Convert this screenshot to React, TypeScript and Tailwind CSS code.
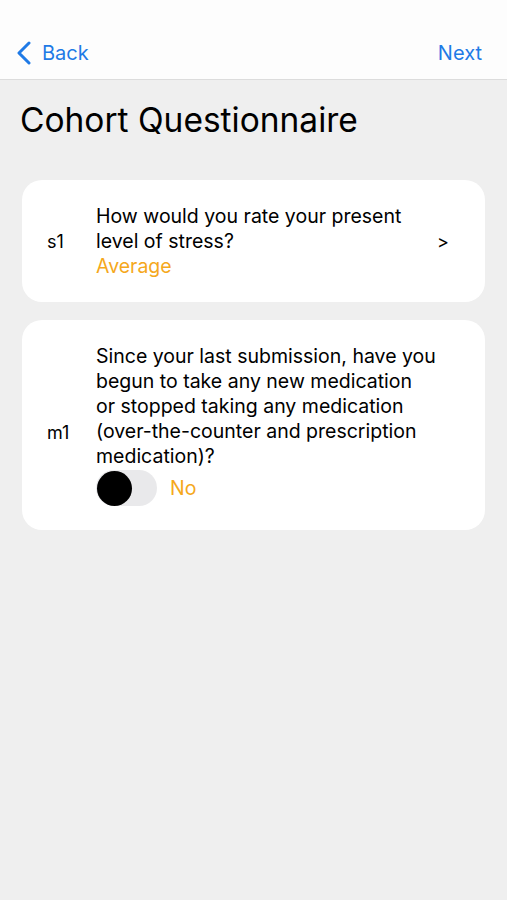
import React from "react";

export default function App() {
  return (
    <div className="w-[507px] h-[900px] bg-[#efefef] flex flex-col" style={{ fontFamily: "Inter, 'Liberation Sans', sans-serif" }}>
      <div className="h-[80px] bg-[#fdfdfd] border-b border-[#dcdcdc] flex items-end justify-between pb-[14px] px-[16px]">
        <div className="flex items-center gap-[10px] text-[#1f7ae6]">
          <svg width="16" height="24" viewBox="0 0 16 24">
            <polyline points="13,2 3,12 13,22" fill="none" stroke="#1f7ae6" strokeWidth="3" strokeLinecap="round" strokeLinejoin="round" />
          </svg>
          <span className="text-[20px] leading-[24px]">Back</span>
        </div>
        <span className="text-[20px] leading-[24px] text-[#1f7ae6] pr-[9px]">Next</span>
      </div>
      <div className="px-[20px] pt-[18px]">
        <h1 className="text-[33.5px] leading-[44px] text-black">Cohort Questionnaire</h1>
      </div>
      <div className="px-[22px] pt-[38px] flex flex-col gap-[18px]">
        <div className="bg-white rounded-[20px] h-[122px] flex items-center pl-[25px] pr-[36px]">
          <span className="w-[49px] text-[18px] text-black">s1</span>
          <div className="flex-1 text-[19.5px] leading-[25px] text-black">
            <div>How would you rate your present</div>
            <div>level of stress?</div>
            <div className="text-[#f5a81c]">Average</div>
          </div>
          <span className="text-[18px] text-black">&gt;</span>
        </div>
        <div className="bg-white rounded-[20px] h-[210px] flex items-center pl-[25px] pr-[20px]">
          <span className="w-[49px] text-[18px] text-black mt-[14px]">m1</span>
          <div className="flex-1 text-[19.5px] leading-[25px] text-black">
            <div>Since your last submission, have you</div>
            <div>begun to take any new medication</div>
            <div>or stopped taking any medication</div>
            <div>(over-the-counter and prescription</div>
            <div>medication)?</div>
            <div className="flex items-center gap-[13px] mt-[1px]">
              <div className="w-[61px] h-[36px] rounded-full bg-[#e9e9eb] flex items-center pl-[1px]">
                <div className="w-[35px] h-[35px] rounded-full bg-black" />
              </div>
              <span className="text-[#f5a81c]">No</span>
            </div>
          </div>
        </div>
      </div>
    </div>
  );
}
